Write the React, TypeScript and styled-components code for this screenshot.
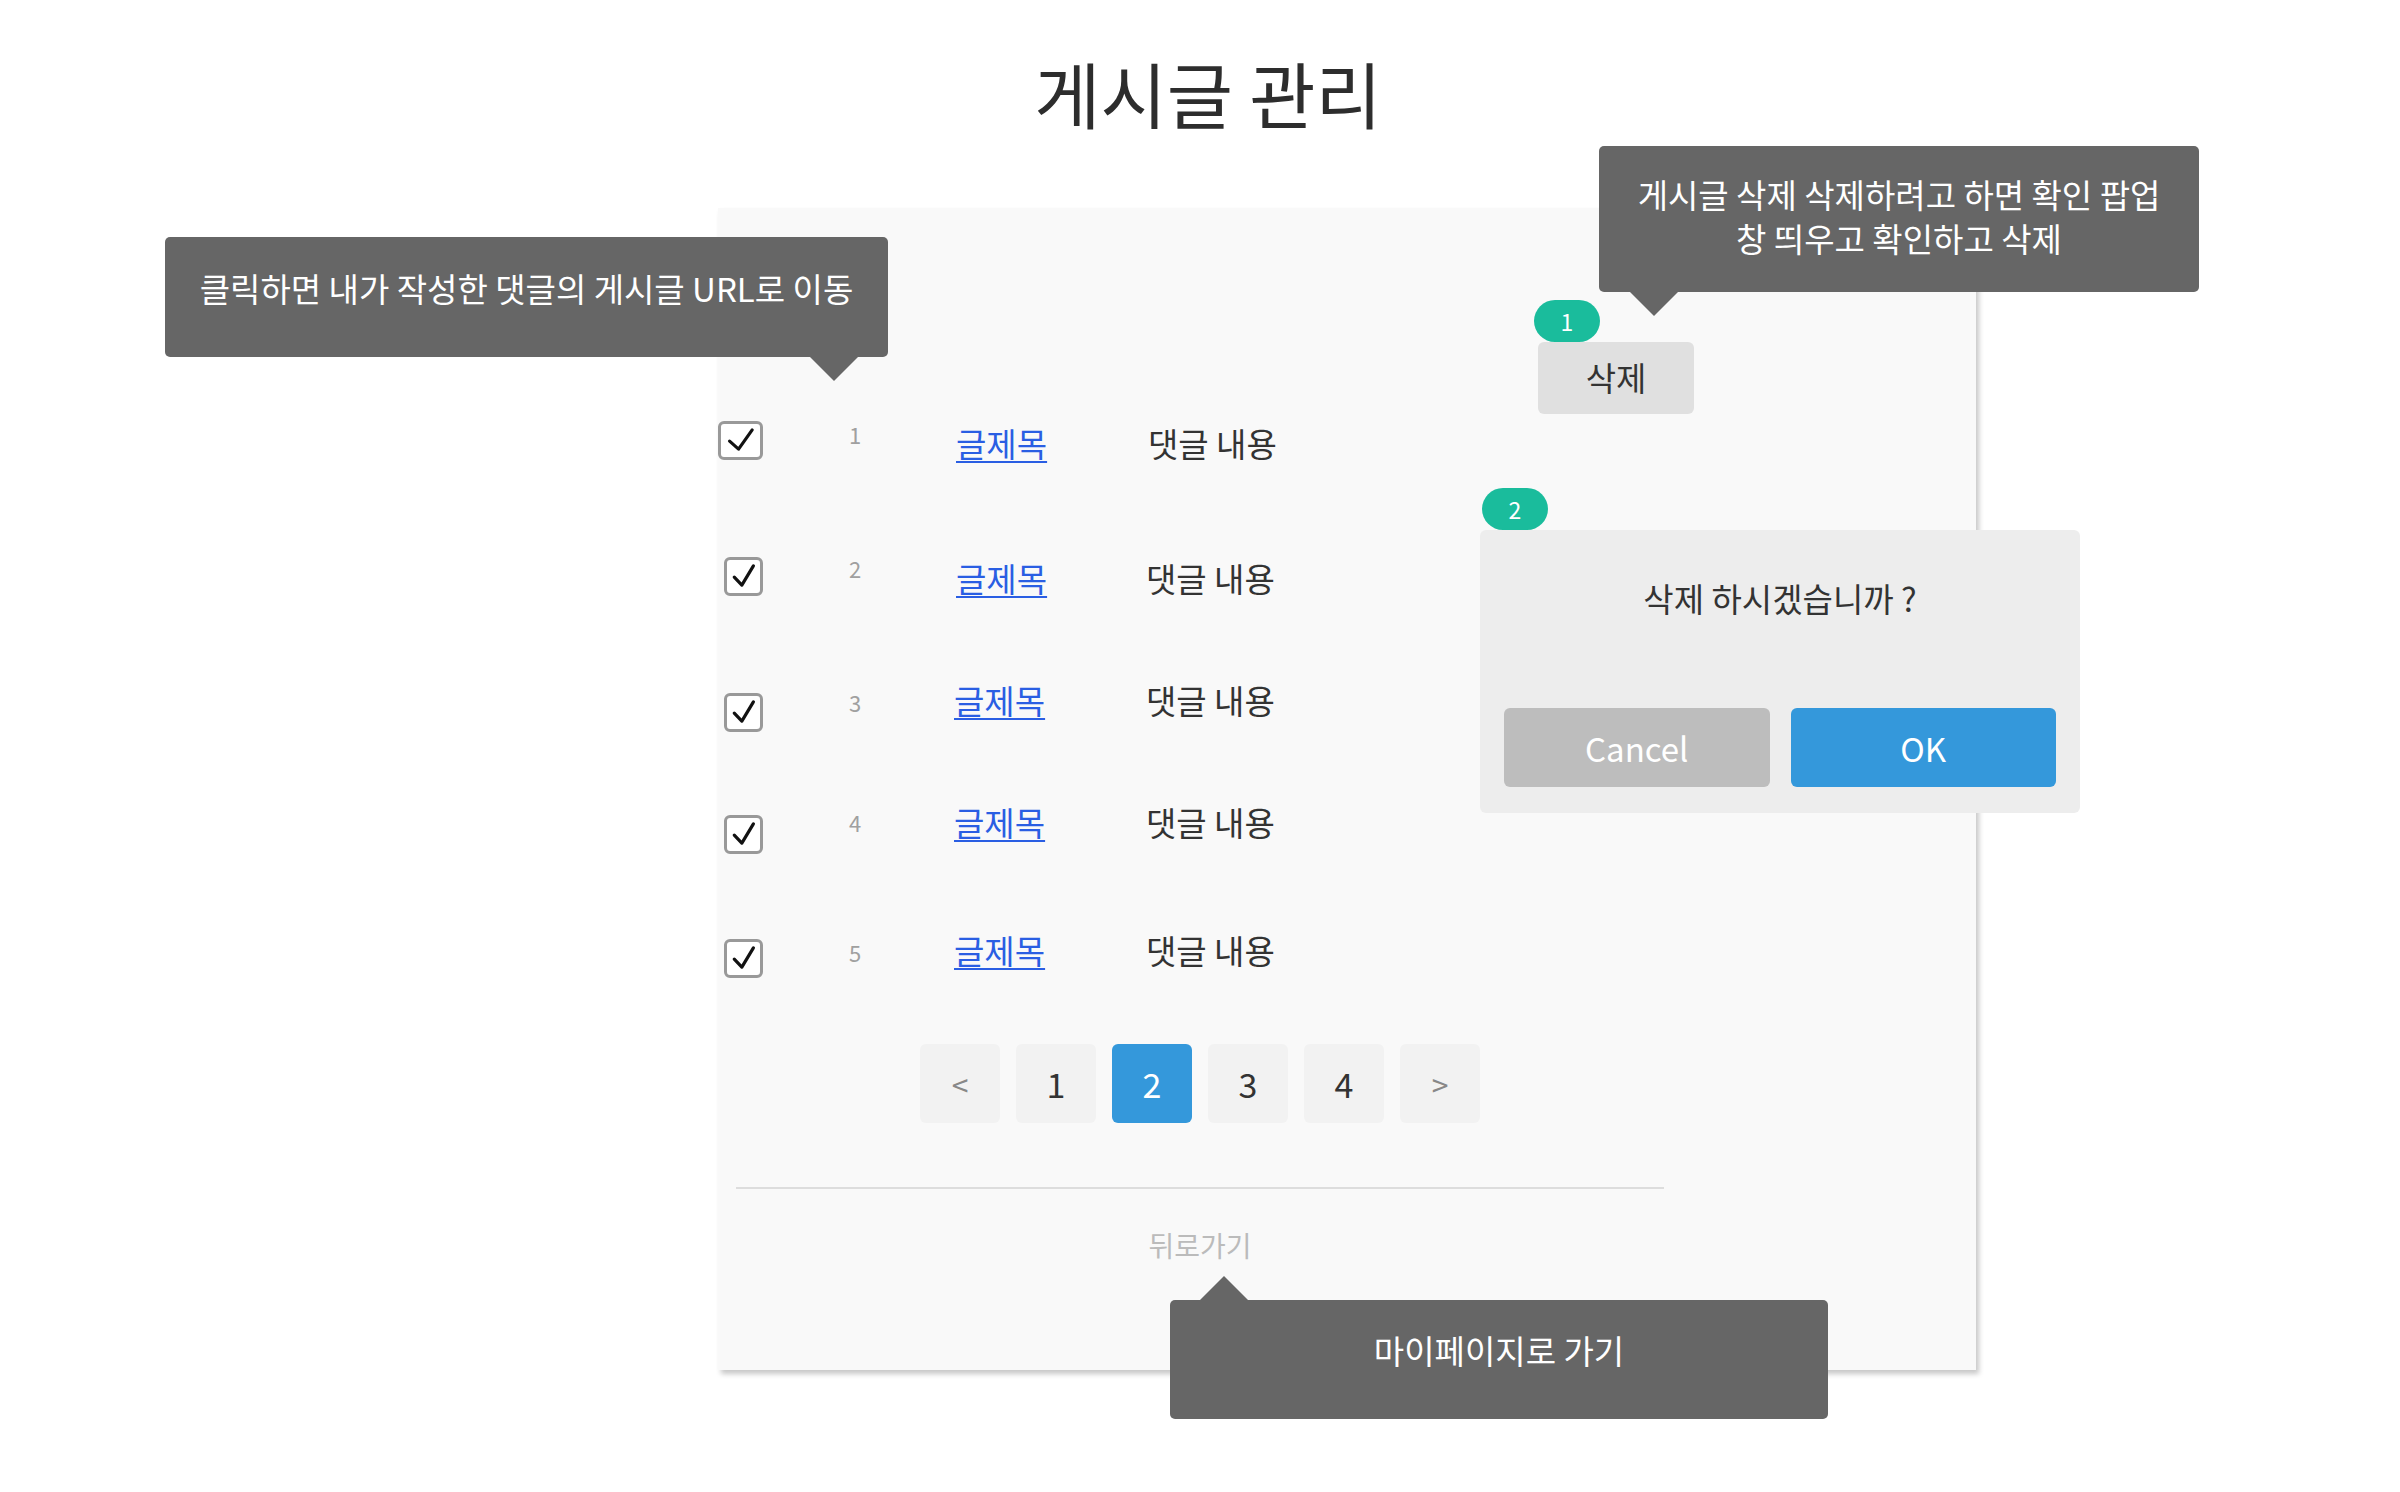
import React from "react";
import styled, { createGlobalStyle } from "styled-components";

const GlobalStyle = createGlobalStyle`
  html, body {
    margin: 0;
    padding: 0;
    background: #ffffff;
  }
  body {
    font-family: "Noto Sans CJK KR", "Noto Sans", sans-serif;
    color: #333333;
  }
  * { box-sizing: border-box; }
`;

const Page = styled.div`
  width: 2400px;
  min-height: 1492px;
  padding-top: 43px;
`;

const Title = styled.h1`
  margin: 0;
  height: 101px;
  padding-left: 16px;
  font-size: 72px;
  line-height: 98px;
  font-weight: 400;
  text-align: center;
  color: #2d2d2d;
`;

const Panel = styled.section`
  position: relative;
  margin: 64px 0 0 718px;
  width: 1258px;
  height: 1162px;
  background: #f9f9f9;
  box-shadow: 3px 4px 5px rgba(0, 0, 0, 0.22);
`;

const TopBar = styled.div`
  display: flex;
  height: 206px;
  padding: 134px 0 0 820px;
`;

const DeleteButton = styled.button`
  width: 156px;
  height: 72px;
  border: none;
  border-radius: 6px;
  background: #e0e0e0;
  color: #333333;
  font-family: inherit;
  font-size: 33px;
  padding: 0 0 2px;
`;

const RowList = styled.div`
  display: flex;
  flex-direction: column;
`;

const Row = styled.div<{ $gap: number }>`
  display: grid;
  grid-template-columns: 120px 34px 84px 190px 1fr;
  align-items: center;
  height: 52px;
  margin-top: ${(p) => p.$gap}px;
`;

const CbCell = styled.div<{ $dy: number }>`
  grid-column: 1;
  width: 45px;
  display: flex;
  justify-content: flex-end;
  transform: translateY(${(p) => p.$dy}px);
`;

const Checkbox = styled.span<{ $w: number }>`
  display: block;
  width: ${(p) => p.$w}px;
  height: 39px;
  border: 3.5px solid #999999;
  border-radius: 6px;
  background: #ffffff;
  svg {
    display: block;
    width: 100%;
    height: 100%;
  }
`;

const Num = styled.span<{ $dy: number }>`
  grid-column: 2;
  text-align: center;
  font-size: 22px;
  line-height: 30px;
  color: #a0a0a0;
  transform: translateY(${(p) => p.$dy}px);
`;

const TitleLink = styled.a<{ $dx: number }>`
  grid-column: 4;
  justify-self: start;
  font-size: 33px;
  line-height: 44px;
  color: #2a5ee3;
  text-decoration: underline;
  text-decoration-thickness: 2px;
  text-underline-offset: 4px;
  margin-left: ${(p) => p.$dx}px;
  cursor: pointer;
`;

const Comment = styled.span<{ $dx: number }>`
  grid-column: 5;
  font-size: 33px;
  line-height: 44px;
  color: #333333;
  margin-left: ${(p) => p.$dx}px;
`;

const Footer = styled.div`
  margin-left: 18px;
  width: 928px;
  display: flex;
  flex-direction: column;
  align-items: center;
`;

const Pagination = styled.nav`
  display: flex;
  gap: 16px;
  margin-top: 68px;
`;

const PageButton = styled.button<{ $active?: boolean; $arrow?: boolean }>`
  width: 80px;
  height: 79px;
  border: none;
  border-radius: 6px;
  padding: 0;
  font-family: inherit;
  font-size: ${(p) => (p.$arrow ? "30px" : "34px")};
  background: ${(p) => (p.$active ? "#3498db" : "#f2f2f2")};
  color: ${(p) => (p.$active ? "#ffffff" : p.$arrow ? "#888888" : "#333333")};
`;

const Divider = styled.hr`
  align-self: stretch;
  margin: 64px 0 0;
  border: none;
  height: 2px;
  background: #dddddd;
`;

const BackLink = styled.a`
  margin-top: 38px;
  font-size: 28px;
  line-height: 36px;
  color: #bbbbbb;
`;

const Tooltip = styled.div<{
  $left: number;
  $top: number;
  $w: number;
  $h: number;
  $arrowX: number;
  $up?: boolean;
}>`
  position: absolute;
  left: ${(p) => p.$left}px;
  top: ${(p) => p.$top}px;
  width: ${(p) => p.$w}px;
  height: ${(p) => p.$h}px;
  background: #666666;
  border-radius: 5px;
  color: #ffffff;
  font-size: 33px;
  line-height: 44px;
  text-align: center;
  display: flex;
  flex-direction: column;
  align-items: center;
  justify-content: center;
  z-index: 3;
  &::after {
    content: "";
    position: absolute;
    left: ${(p) => p.$arrowX - 24}px;
    ${(p) => (p.$up ? "top: -24px;" : "bottom: -24px;")}
    border-left: 24px solid transparent;
    border-right: 24px solid transparent;
    ${(p) =>
      p.$up
        ? "border-bottom: 24px solid #666666;"
        : "border-top: 24px solid #666666;"}
  }
`;

const TipText = styled.span<{ $shift?: number }>`
  display: block;
  transform: translateY(${(p) => p.$shift ?? 0}px);
`;

const Badge = styled.span<{ $left: number; $top: number }>`
  position: absolute;
  left: ${(p) => p.$left}px;
  top: ${(p) => p.$top}px;
  width: 66px;
  height: 42px;
  border-radius: 21px;
  background: #1abc9c;
  color: #ffffff;
  font-size: 23px;
  line-height: 42px;
  text-align: center;
  z-index: 4;
`;

const Dialog = styled.div`
  position: absolute;
  left: 762px;
  top: 322px;
  width: 600px;
  height: 283px;
  background: #ededed;
  border-radius: 6px;
  padding: 46px 24px 26px;
  display: flex;
  flex-direction: column;
  z-index: 2;
`;

const DialogText = styled.p`
  margin: 0;
  text-align: center;
  font-size: 33px;
  line-height: 44px;
  color: #333333;
`;

const DialogActions = styled.div`
  display: flex;
  gap: 21px;
  margin-top: auto;
`;

const DialogButton = styled.button<{ $primary?: boolean }>`
  flex: 1;
  height: 79px;
  border: none;
  border-radius: 6px;
  background: ${(p) => (p.$primary ? "#3498db" : "#bdbdbd")};
  color: #ffffff;
  font-family: inherit;
  font-size: 33px;
  padding: 0;
`;

const Check = () => (
  <svg viewBox="0 0 100 100" preserveAspectRatio="none">
    <path
      d="M22 52 L45 76 L80 18"
      fill="none"
      stroke="#111111"
      strokeWidth="3.2"
      strokeLinecap="round"
      strokeLinejoin="round"
      vectorEffect="non-scaling-stroke"
    />
  </svg>
);

const rows = [
  { n: 1, gap: 3, cbW: 45, cbDy: -3, numDy: -9, tDx: 0, cDx: 2 },
  { n: 2, gap: 83, cbW: 39, cbDy: -2, numDy: -10, tDx: 0, cDx: 0 },
  { n: 3, gap: 70, cbW: 39, cbDy: 12, numDy: 2, tDx: -2, cDx: 0 },
  { n: 4, gap: 70, cbW: 39, cbDy: 12, numDy: 0, tDx: -2, cDx: 0 },
  { n: 5, gap: 76, cbW: 39, cbDy: 8, numDy: 2, tDx: -2, cDx: 0 },
];

export default function App() {
  return (
    <>
      <GlobalStyle />
      <Page>
        <Title>게시글 관리</Title>
        <Panel>
          <TopBar>
            <DeleteButton>삭제</DeleteButton>
          </TopBar>
          <RowList>
            {rows.map((r) => (
              <Row key={r.n} $gap={r.gap}>
                <CbCell $dy={r.cbDy}>
                  <Checkbox $w={r.cbW}>
                    <Check />
                  </Checkbox>
                </CbCell>
                <Num $dy={r.numDy}>{r.n}</Num>
                <TitleLink $dx={r.tDx}>글제목</TitleLink>
                <Comment $dx={r.cDx}>댓글 내용</Comment>
              </Row>
            ))}
          </RowList>
          <Footer>
            <Pagination>
              <PageButton $arrow>&lt;</PageButton>
              <PageButton>1</PageButton>
              <PageButton $active>2</PageButton>
              <PageButton>3</PageButton>
              <PageButton>4</PageButton>
              <PageButton $arrow>&gt;</PageButton>
            </Pagination>
            <Divider />
            <BackLink>뒤로가기</BackLink>
          </Footer>

          <Tooltip $left={-553} $top={29} $w={723} $h={120} $arrowX={669}>
            <TipText $shift={-9}>클릭하면 내가 작성한 댓글의 게시글 URL로 이동</TipText>
          </Tooltip>
          <Tooltip $left={881} $top={-62} $w={600} $h={146} $arrowX={55}>
            <TipText $shift={-3}>게시글 삭제 삭제하려고 하면 확인 팝업</TipText>
            <TipText $shift={-3}>창 띄우고 확인하고 삭제</TipText>
          </Tooltip>
          <Badge $left={816} $top={92}>1</Badge>
          <Badge $left={764} $top={280}>2</Badge>
          <Dialog>
            <DialogText>삭제 하시겠습니까 ?</DialogText>
            <DialogActions>
              <DialogButton>Cancel</DialogButton>
              <DialogButton $primary>OK</DialogButton>
            </DialogActions>
          </Dialog>
          <Tooltip $left={452} $top={1092} $w={658} $h={119} $arrowX={54} $up>
            <TipText $shift={-10}>마이페이지로 가기</TipText>
          </Tooltip>
        </Panel>
      </Page>
    </>
  );
}
